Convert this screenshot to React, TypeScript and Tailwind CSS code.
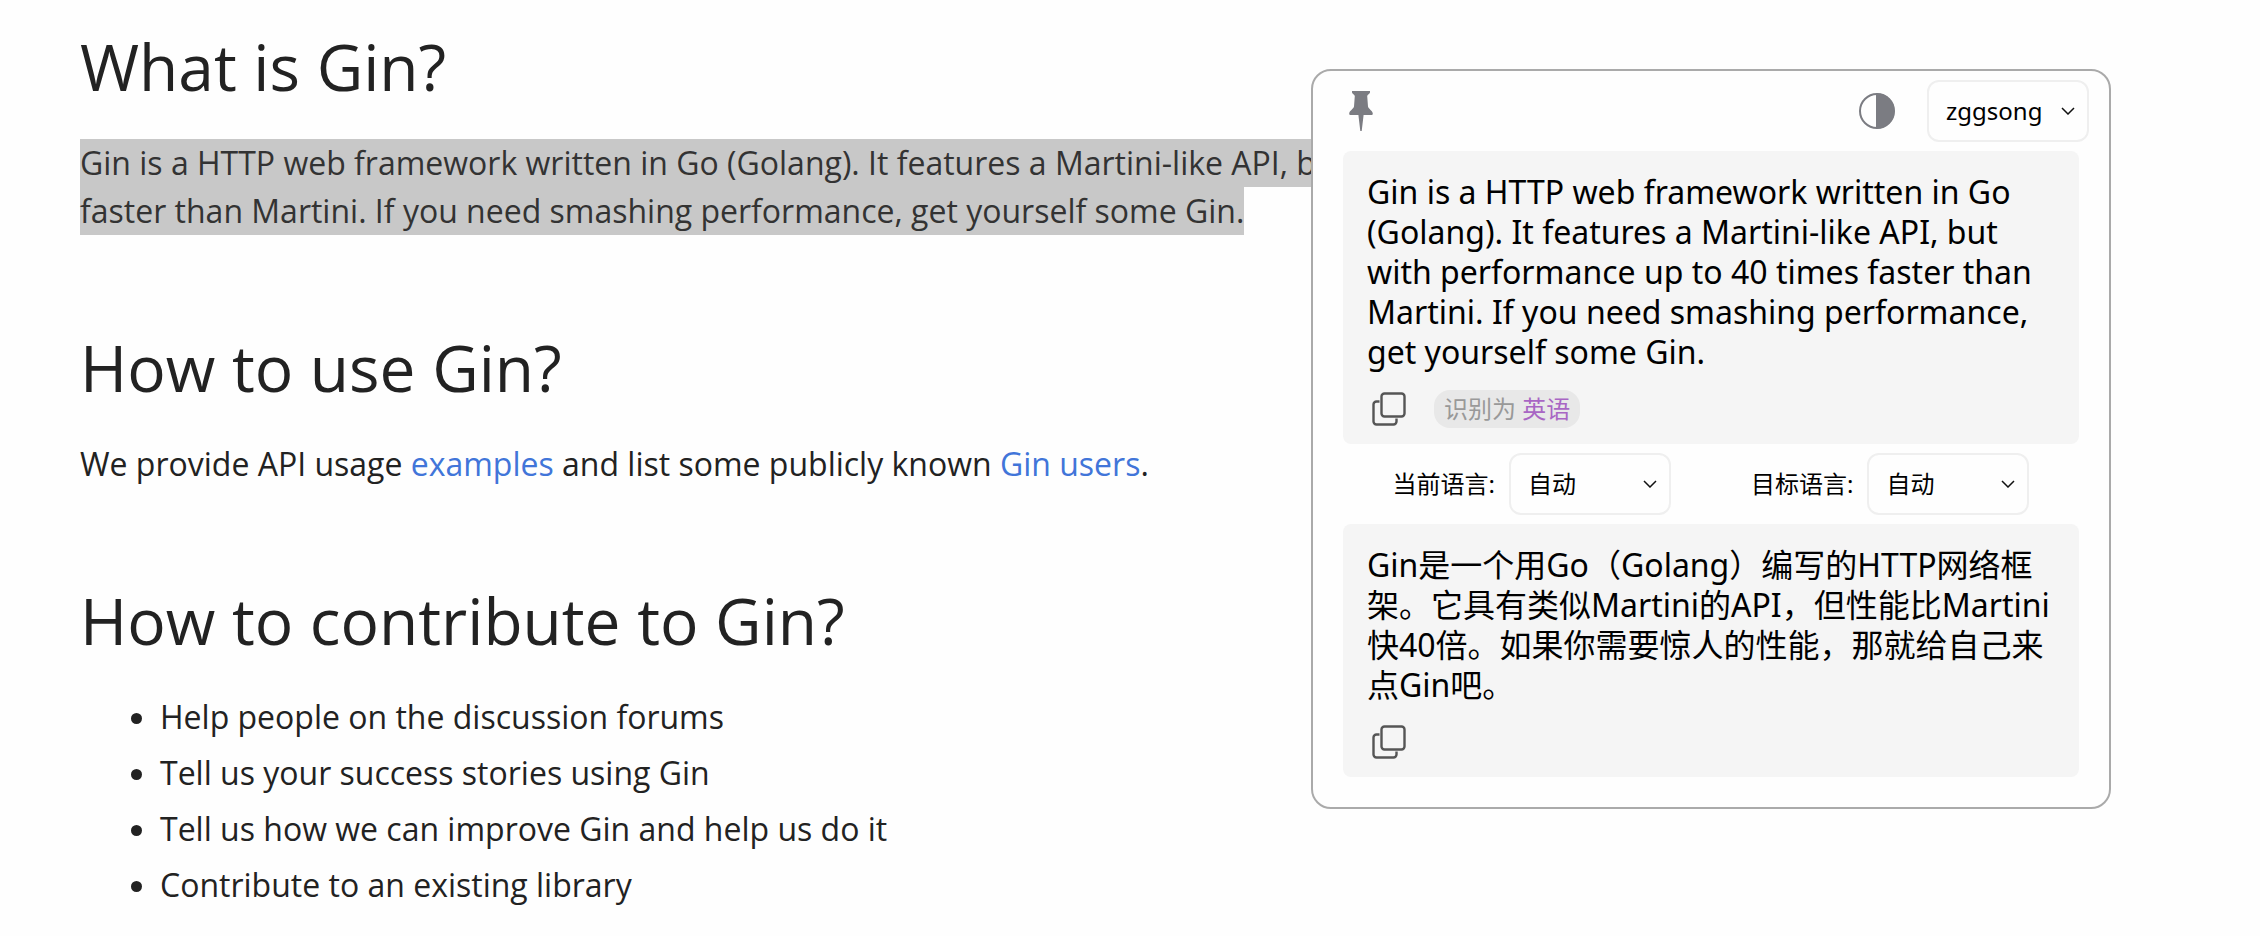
import type { ReactNode } from "react";

function PinIcon() {
  return (
    <svg viewBox="0 0 24 40" className="h-10 w-6" fill="#7b7c82" aria-hidden="true">
      <path d="M3 0H21V1.6C20.6 3 18.6 3.4 18.2 5L19 15.5C19.6 18 23.6 19.8 23.8 22.4C23.8 23.4 23.2 24 22.4 24H14.6L12.7 40H11.3L9.4 24H1.6C0.8 24 0.2 23.4 0.2 22.4C0.4 19.8 4.4 18 5 15.5L5.8 5C5.4 3.4 3.4 3 3 1.6Z" />
    </svg>
  );
}

function ContrastIcon() {
  return (
    <svg viewBox="0 0 36 36" className="size-9" aria-hidden="true">
      <circle cx="18" cy="18" r="17" fill="none" stroke="#7b7c82" strokeWidth="2" />
      <path d="M17 0.5H18A17.5 17.5 0 0 1 18 35.5H17Z" fill="#7b7c82" />
    </svg>
  );
}

function CopyIcon() {
  return (
    <svg viewBox="0 0 34 34" className="size-[34px]" fill="none" stroke="#555" strokeWidth="2.4" aria-hidden="true">
      <rect x="9.5" y="1.5" width="23" height="23" rx="3" />
      <path d="M7.5 9.5H4.5A3 3 0 0 0 1.500 12.5V29.5A3 3 0 0 0 4.5 32.5H21.5A3 3 0 0 0 24.5 29.5V26.5" />
    </svg>
  );
}

function Picker({ id, label, options }: { id: string; label?: string; options: string[] }) {
  return (
    <span className="relative flex items-center">
      <select
        id={id}
        aria-label={label}
        className="h-[62px] w-[162px] appearance-none rounded-xl border-2 border-[#efefef] bg-[#fefefe] pl-[17px] text-2xl text-black"
      >
        {options.map((o) => (
          <option key={o}>{o}</option>
        ))}
      </select>
      <svg
        viewBox="0 0 14 8"
        className="pointer-events-none absolute right-3.5 h-2 w-3.5"
        fill="none"
        stroke="#111"
        strokeWidth="1.5"
        aria-hidden="true"
      >
        <path d="M1 1L7 7L13 1" />
      </svg>
    </span>
  );
}

function TextPanel({ text, children }: { text: string; children?: ReactNode }) {
  return (
    <section className="rounded-lg bg-[#f5f5f5] pt-[21px] pr-5 pb-4 pl-6">
      <p className="text-[32px] leading-10 text-black">{text}</p>
      <div className="mt-[18px] flex h-[38px] items-center gap-7 pl-[5px]">
        <button type="button" aria-label="复制">
          <CopyIcon />
        </button>
        {children}
      </div>
    </section>
  );
}

function Translator() {
  return (
    <aside className="absolute top-[69px] right-[149px] w-[800px] rounded-[20px] border-2 border-[#aaa] bg-[#fefefe] px-[30px] pb-[30px] font-['Noto_Sans','Noto_Sans_CJK_SC',sans-serif]">
      <header className="-mr-2.5 flex h-20 items-center justify-between pl-1.5">
        <button type="button" aria-label="置顶">
          <PinIcon />
        </button>
        <div className="flex items-center gap-8">
          <button type="button" aria-label="切换主题">
            <ContrastIcon />
          </button>
          <Picker id="account" label="账号" options={["zggsong"]} />
        </div>
      </header>
      <TextPanel text="Gin is a HTTP web framework written in Go (Golang). It features a Martini-like API, but with performance up to 40 times faster than Martini. If you need smashing performance, get yourself some Gin.">
        <span className="flex h-[38px] items-center rounded-2xl bg-[#e8e8e8] px-2.5 text-2xl whitespace-pre text-[#999]">
          识别为 <span className="text-[#a866c4]">英语</span>
        </span>
      </TextPanel>
      <div className="flex h-20 items-center justify-center gap-20">
        <div className="flex items-center gap-3.5">
          <label htmlFor="source" className="text-2xl text-black">
            当前语言:
          </label>
          <Picker id="source" options={["自动"]} />
        </div>
        <div className="flex items-center gap-3.5">
          <label htmlFor="target" className="text-2xl text-black">
            目标语言:
          </label>
          <Picker id="target" options={["自动"]} />
        </div>
      </div>
      <TextPanel text="Gin是一个用Go（Golang）编写的HTTP网络框架。它具有类似Martini的API，但性能比Martini快40倍。如果你需要惊人的性能，那就给自己来点Gin吧。" />
    </aside>
  );
}

function Topic({ title, children }: { title: string; children: ReactNode }) {
  return (
    <section className="flex flex-col gap-8">
      <h2 className="text-[64px] leading-20">{title}</h2>
      {children}
    </section>
  );
}

const ways = [
  "Help people on the discussion forums",
  "Tell us your success stories using Gin",
  "Tell us how we can improve Gin and help us do it",
  "Contribute to an existing library",
];

export default function App() {
  return (
    <div className="relative min-h-screen bg-[#fefefe]">
      <main className="flex max-w-[1860px] flex-col gap-[93px] pt-[27px] pl-20 font-['Open_Sans',sans-serif] text-[32px] leading-12 text-[#222]">
        <Topic title="What is Gin?">
          <p>
            <mark className="bg-[#c8c8c8] pt-0.5 pb-[3px] text-[#333]">
              Gin is a HTTP web framework written in Go (Golang). It features a Martini-like API, but with
              performance up to 40 times faster than Martini. If you need smashing performance, get yourself
              some Gin.
            </mark>
          </p>
        </Topic>
        <Topic title="How to use Gin?">
          <p>
            We provide API usage{" "}
            <a href="#examples" className="text-[#4175d9]">
              examples
            </a>{" "}
            and list some publicly known{" "}
            <a href="#users" className="text-[#4175d9]">
              Gin users
            </a>
            .
          </p>
        </Topic>
        <Topic title="How to contribute to Gin?">
          <ul className="flex list-disc flex-col gap-2 pl-20">
            {ways.map((way) => (
              <li key={way}>{way}</li>
            ))}
          </ul>
        </Topic>
      </main>
      <Translator />
    </div>
  );
}
